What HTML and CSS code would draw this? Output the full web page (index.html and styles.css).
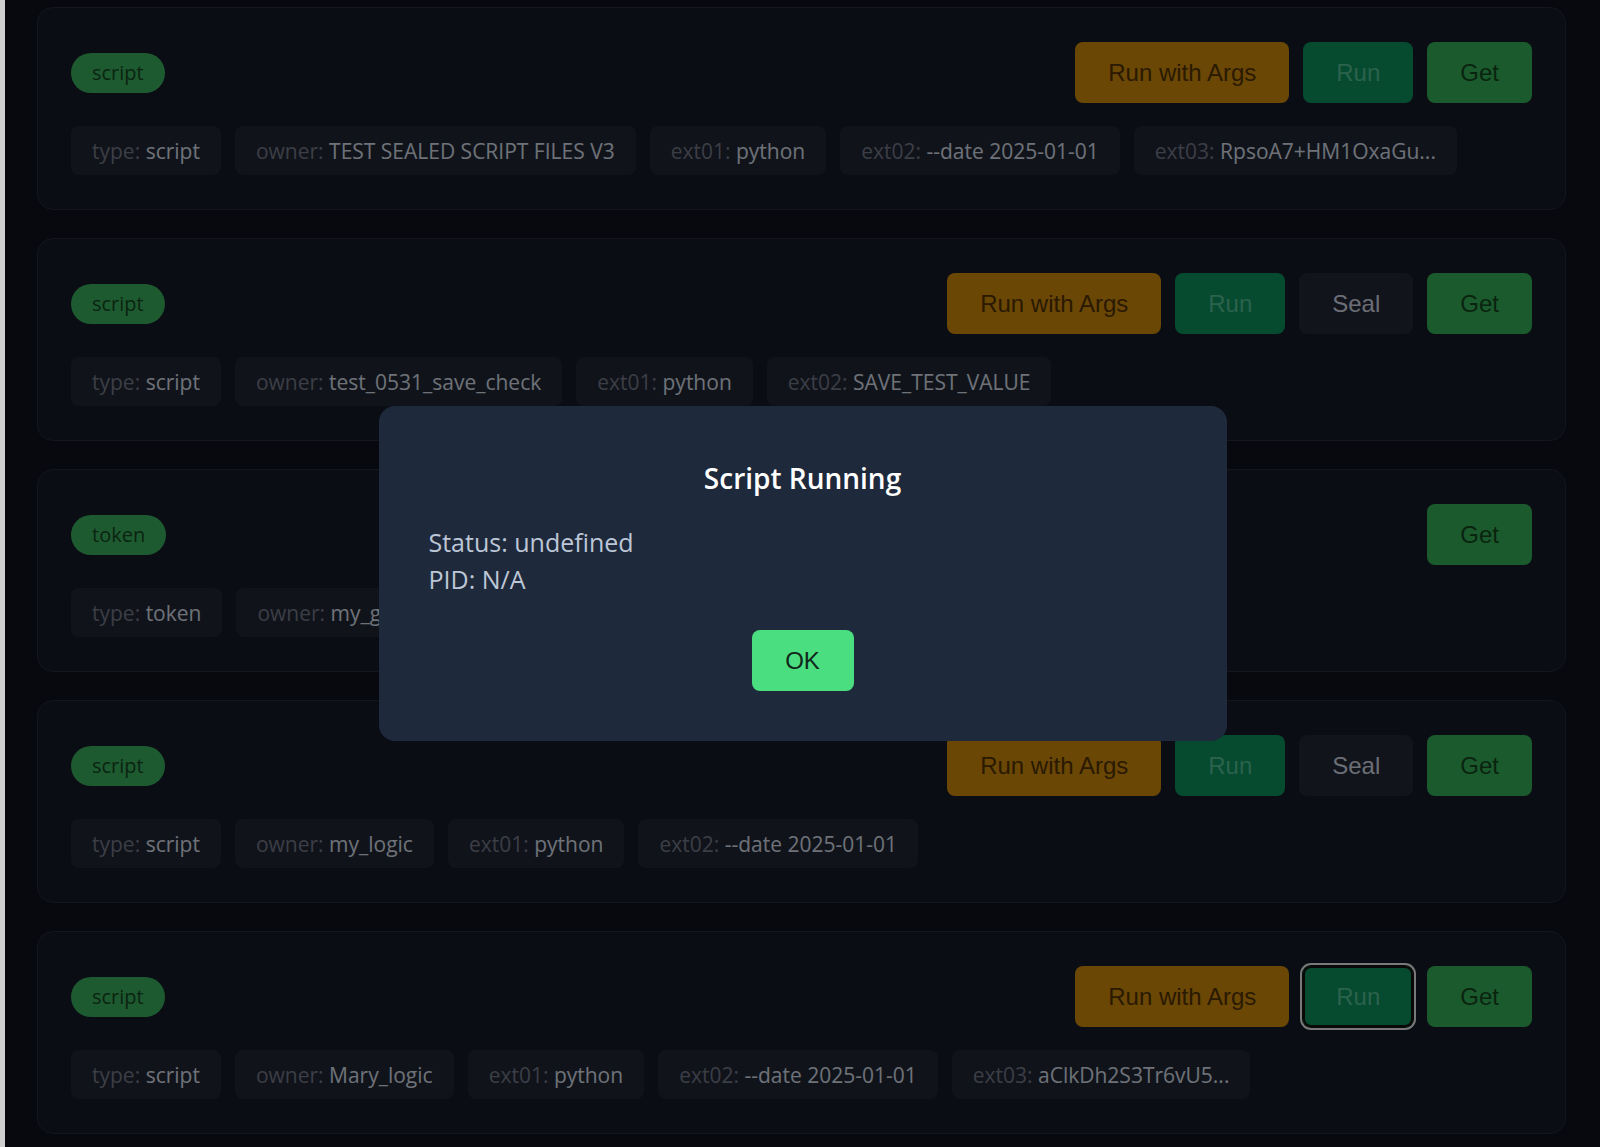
FILE: index.html
```html
<!DOCTYPE html>
<html lang="en">
<head>
  <meta charset="UTF-8">
  <meta name="viewport" content="width=device-width, initial-scale=1.0">
  <link rel="stylesheet" href="styles.css">
  <title>Files</title>
</head>
<body>
  <div class="app">
    <div class="card">
      <div class="card-head">
        <span class="badge">script</span>
        <div class="actions">
          <button class="btn btn-args">Run with Args</button>
          <button class="btn btn-run">Run</button>
          <button class="btn btn-get">Get</button>
        </div>
      </div>
      <div class="tags">
        <span class="tag">type: <span class="val">script</span></span>
        <span class="tag">owner: <span class="val">TEST SEALED SCRIPT FILES V3</span></span>
        <span class="tag">ext01: <span class="val">python</span></span>
        <span class="tag">ext02: <span class="val">--date 2025-01-01</span></span>
        <span class="tag">ext03: <span class="val">RpsoA7+HM1OxaGu...</span></span>
      </div>
    </div>

    <div class="card">
      <div class="card-head">
        <span class="badge">script</span>
        <div class="actions">
          <button class="btn btn-args">Run with Args</button>
          <button class="btn btn-run">Run</button>
          <button class="btn btn-seal">Seal</button>
          <button class="btn btn-get">Get</button>
        </div>
      </div>
      <div class="tags">
        <span class="tag">type: <span class="val">script</span></span>
        <span class="tag">owner: <span class="val">test_0531_save_check</span></span>
        <span class="tag">ext01: <span class="val">python</span></span>
        <span class="tag">ext02: <span class="val">SAVE_TEST_VALUE</span></span>
      </div>
    </div>

    <div class="card">
      <div class="card-head">
        <span class="badge">token</span>
        <div class="actions">
          <button class="btn btn-get">Get</button>
        </div>
      </div>
      <div class="tags">
        <span class="tag">type: <span class="val">token</span></span>
        <span class="tag">owner: <span class="val">my_gpt_token</span></span>
      </div>
    </div>

    <div class="card">
      <div class="card-head">
        <span class="badge">script</span>
        <div class="actions">
          <button class="btn btn-args">Run with Args</button>
          <button class="btn btn-run">Run</button>
          <button class="btn btn-seal">Seal</button>
          <button class="btn btn-get">Get</button>
        </div>
      </div>
      <div class="tags">
        <span class="tag">type: <span class="val">script</span></span>
        <span class="tag">owner: <span class="val">my_logic</span></span>
        <span class="tag">ext01: <span class="val">python</span></span>
        <span class="tag">ext02: <span class="val">--date 2025-01-01</span></span>
      </div>
    </div>

    <div class="card">
      <div class="card-head">
        <span class="badge">script</span>
        <div class="actions">
          <button class="btn btn-args">Run with Args</button>
          <button class="btn btn-run focused">Run</button>
          <button class="btn btn-get">Get</button>
        </div>
      </div>
      <div class="tags">
        <span class="tag">type: <span class="val">script</span></span>
        <span class="tag">owner: <span class="val">Mary_logic</span></span>
        <span class="tag">ext01: <span class="val">python</span></span>
        <span class="tag">ext02: <span class="val">--date 2025-01-01</span></span>
        <span class="tag">ext03: <span class="val">aClkDh2S3Tr6vU5...</span></span>
      </div>
    </div>

    <div class="overlay">
      <div class="modal">
        <h2 class="modal-title">Script Running</h2>
        <p class="modal-line">Status: undefined</p>
        <p class="modal-line">PID: N/A</p>
        <div class="modal-foot">
          <button class="btn btn-ok">OK</button>
        </div>
      </div>
    </div>
  </div>
</body>
</html>
```

FILE: styles.css
```css
html {
  background: #cfcfcf;
}

body {
  margin: 0 0 0 5px;
  height: 100vh;
  overflow: hidden;
  font-family: "Open Sans", "Noto Sans", sans-serif;
}

.app {
  position: relative;
  box-sizing: border-box;
  height: 100%;
  background: #0e121e;
  padding: 7px 34px 0 32px;
  display: flex;
  flex-direction: column;
  gap: 28px;
}

.card {
  background: #161a2a;
  border: 1px solid #262c3b;
  border-radius: 16px;
  padding: 34px 33px;
}

.card-head {
  display: flex;
  justify-content: space-between;
  align-items: center;
}

.badge {
  background: #3cb460;
  color: #154a23;
  border-radius: 999px;
  height: 40px;
  line-height: 40px;
  padding: 0 21px;
  font-size: 20px;
}

.actions {
  display: flex;
  gap: 14px;
}

.btn {
  height: 61px;
  padding: 0 33px;
  border: none;
  border-radius: 8px;
  font-family: "Liberation Sans", Arial, sans-serif;
  font-size: 24px;
  cursor: pointer;
}

.btn-args {
  background: #d68e0c;
  color: #543404;
}

.btn-run {
  background: #0c945e;
  color: #56c49a;
}

.btn-seal {
  background: #242836;
  color: #d6dcea;
}

.btn-get {
  background: #36b45a;
  color: #144820;
}

.btn.focused {
  box-shadow: inset 0 0 0 2px #121212, 0 0 0 1px #121212, 0 0 0 3px #f2f2f2;
}

.tags {
  display: flex;
  gap: 14px;
  margin-top: 23px;
}

.tag {
  display: flex;
  align-items: center;
  height: 49px;
  padding: 0 21px;
  background: #222634;
  border-radius: 8px;
  font-size: 21px;
  color: #767c8c;
  white-space: pre;
}

.tag .val {
  color: #dce2f0;
}

.overlay {
  position: absolute;
  inset: 0;
  background: rgba(0, 0, 0, 0.5);
  display: flex;
  align-items: center;
  justify-content: center;
}

.modal {
  box-sizing: border-box;
  width: 848px;
  padding: 50px;
  background: #1e293b;
  border-radius: 16px;
}

.modal-title {
  margin: 0 0 23px;
  text-align: center;
  color: #ffffff;
  font-size: 28px;
  font-weight: 600;
  line-height: 45px;
}

.modal-line {
  margin: 0;
  color: #bcc6d6;
  font-size: 25px;
  line-height: 37px;
}

.modal-foot {
  display: flex;
  justify-content: center;
  margin-top: 32px;
}

.btn-ok {
  width: 102px;
  padding: 0;
  background: #4ade80;
  color: #10271a;
}
```
